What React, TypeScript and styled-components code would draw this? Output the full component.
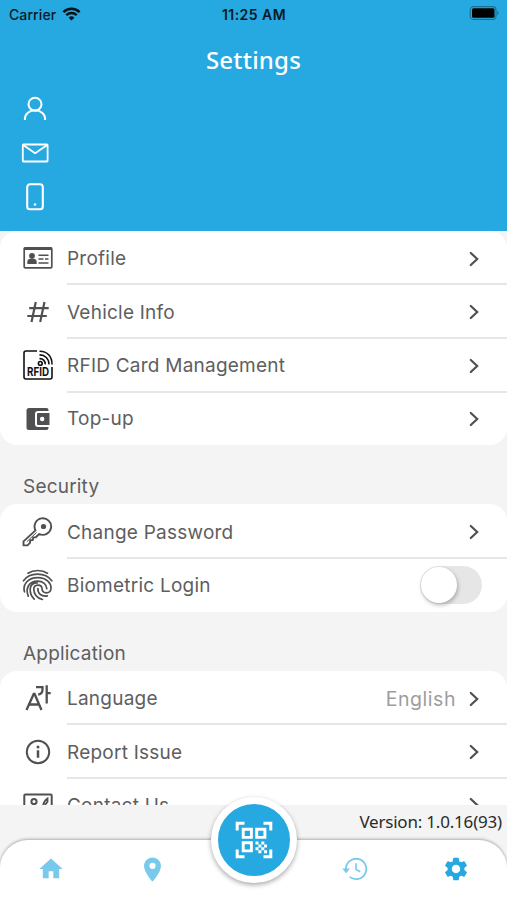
import React from 'react';
import styled, { createGlobalStyle } from 'styled-components';
import { MdHome, MdLocationOn, MdSettings } from 'react-icons/md';

const GlobalStyle = createGlobalStyle`
  * { box-sizing: border-box; }
  body { margin: 0; background: #f4f4f4; }
`;

const Screen = styled.div`
  width: 507px;
  height: 900px;
  overflow: hidden;
  display: flex;
  flex-direction: column;
  background: #f4f4f4;
  color: #5e5e60;
  font-family: Inter, 'Liberation Sans', sans-serif;
`;

const Header = styled.header`
  height: 230.5px;
  flex: none;
  background: #26a8e1;
`;

const StatusBar = styled.div`
  height: 28px;
  padding: 0 8px 0 9px;
  display: grid;
  grid-template-columns: 1fr auto 1fr;
  align-items: center;
  color: #0a1a24;
`;

const Carrier = styled.div`
  display: flex;
  align-items: center;
  gap: 6px;
  font-size: 14px;
  letter-spacing: 0.1px;
  font-weight: 450;
`;

const Clock = styled.div`
  font-size: 14px;
  font-weight: 600;
  letter-spacing: 0.45px;
`;

const Battery = styled.div`
  display: flex;
  justify-content: flex-end;
  transform: translateY(-1px);
`;

const Title = styled.h1`
  margin: 13px 0 0;
  height: 38px;
  line-height: 38px;
  text-align: center;
  color: #fff;
  font-family: 'Noto Sans', sans-serif;
  font-weight: 500;
  font-size: 24px;
  letter-spacing: 0.2px;
`;

const Contact = styled.div`
  display: flex;
  flex-direction: column;
  padding: 7.5px 0 0 20px;
`;

const ContactLine = styled.div`
  height: 44px;
  width: 30px;
  display: flex;
  align-items: center;
  justify-content: center;
`;

const Content = styled.main`
  flex: 1;
  min-height: 0;
  overflow: hidden;
`;

const Card = styled.section`
  background: #fff;
  border-radius: 17px;
  overflow: hidden;
`;

const Heading = styled.h2`
  margin: 0;
  height: 59px;
  padding: 23px 0 0 23px;
  font-size: 19px;
  line-height: 37px;
  font-weight: 400;
  letter-spacing: 0.2px;
`;

const Row = styled.div`
  height: 53.7px;
  display: flex;
`;

const IconCell = styled.div`
  width: 67px;
  padding-left: 8px;
  padding-top: 1px;
  display: flex;
  align-items: center;
  justify-content: center;
`;

const Body = styled.div<{ $last?: boolean }>`
  flex: 1;
  display: flex;
  align-items: center;
  padding-right: 28px;
  padding-top: ${(p) => (p.$last ? '0.5px' : '2.5px')};
  box-shadow: ${(p) => (p.$last ? 'none' : '0 1px 0 #e6e6e6, inset 0 -1px 0 #e6e6e6')};
`;

const Label = styled.span`
  flex: 1;
  font-size: 19px;
  letter-spacing: 0.23px;
`;

const Value = styled.span`
  font-size: 19.500px;
  letter-spacing: 0.55px;
  color: #9d9d9d;
  margin-right: 13px;
`;

const Switch = styled.div`
  width: 62px;
  height: 38px;
  margin-right: -3px;
  padding: 1px;
  border-radius: 19px;
  background: #e6e6e6;
`;

const Knob = styled.div`
  width: 36px;
  height: 36px;
  border-radius: 50%;
  background: #fff;
  box-shadow: 1px 2px 4px rgba(0, 0, 0, 0.28);
`;

const Footer = styled.footer`
  height: 95px;
  flex: none;
  position: relative;
  background: #f4f4f4;
`;

const Version = styled.div`
  height: 35px;
  padding-right: 5px;
  text-align: right;
  line-height: 34px;
  color: #2b2b2b;
  font-family: 'Noto Sans', sans-serif;
  font-size: 17px;
  letter-spacing: -0.2px;
`;

const Nav = styled.nav`
  height: 60px;
  border-radius: 28px 28px 0 0;
  background: #fff;
  box-shadow: 0 -1px 3px rgba(0, 0, 0, 0.3);
  display: grid;
  grid-template-columns: repeat(5, 1fr);
`;

const Tab = styled.div<{ $active?: boolean }>`
  display: flex;
  align-items: center;
  justify-content: center;
  padding-bottom: 2px;
  color: ${(p) => (p.$active ? '#26a8e1' : '#78c9eb')};
`;

const ScanButton = styled.div`
  position: absolute;
  left: 211px;
  top: -8px;
  width: 86px;
  height: 86px;
  border: 7.5px solid #fff;
  border-radius: 50%;
  background: #26a8e1;
  box-shadow: 0 2px 5px rgba(0, 0, 0, 0.35);
  display: flex;
  align-items: center;
  justify-content: center;
`;

const RfidText = styled.text`
  font: 700 11.5px Inter, sans-serif;
`;

const Chevron = () => (
  <svg width="10" height="16" viewBox="0 0 10 16" fill="none" stroke="#505052" strokeWidth="2.2" strokeLinecap="round">
    <path d="M1.800 2 8.200 8l-6.400 6" />
  </svg>
);

const WifiIcon = () => (
  <svg width="19" height="14" viewBox="0 0 18 14" fill="none" stroke="#06131b" strokeWidth="2.5">
    <path d="M.9 5.1a11.6 11.6 0 0 1 16.2 0M3.8 8.2a7.500 7.500 0 0 1 10.4 0" />
    <path d="M9 13.5 6.1 10.7a4.2 4.2 0 0 1 5.8 0Z" fill="#06131b" stroke="none" />
  </svg>
);

const BatteryIcon = () => (
  <svg width="30" height="14" viewBox="0 0 30 14">
    <rect x="1.2" y=".6" width="25.8" height="12.8" rx="3.5" fill="none" stroke="#19708f" strokeWidth="1.1" />
    <rect x="3" y="2.300" width="22.500" height="9.500" rx="1.500" fill="#000" />
    <path d="M28.200 4.700a2.600 2.600 0 0 1 0 4.600Z" fill="#19708f" />
  </svg>
);

const PersonIcon = () => (
  <svg width="24" height="26" viewBox="0 0 24 26" fill="none" stroke="#fff" strokeWidth="2">
    <circle cx="12" cy="8.200" r="6.500" />
    <path d="M1.900 24v-1.200a10.100 8.600 0 0 1 20.200 0V24" />
  </svg>
);

const MailIcon = () => (
  <svg width="28" height="20" viewBox="0 0 28 20" fill="none" stroke="#fff" strokeWidth="1.8" strokeLinejoin="round">
    <rect x="1.800" y="1.500" width="24.800" height="17" rx=".7" />
    <path d="m2.200 2 11.900 8.200L26.200 2" />
  </svg>
);

const PhoneIcon = () => (
  <svg width="18" height="28" viewBox="0 0 18 28" fill="none" stroke="#fff" strokeWidth="2.1">
    <rect x="1.200" y="1.300" width="15.600" height="25" rx="2.800" />
    <circle cx="9" cy="21.500" r="1.300" fill="#fff" stroke="none" />
  </svg>
);

const ProfileIcon = () => (
  <svg width="30" height="24" viewBox="0 0 30 24" fill="none" stroke="#505052" strokeWidth="1.700">
    <rect x="1.200" y="1.800" width="27.600" height="20" rx="1" />
    <path d="M1 2.800h28" strokeWidth="2.400" />
    <path d="M15.500 9.300h10M15.500 13h5M22 13h3.500M15.500 17h10" strokeWidth="1.500" />
    <circle cx="9" cy="9.800" r="2.900" fill="#505052" stroke="none" />
    <path d="M4.300 18v-2.300c0-2 2-3.200 4.700-3.200s4.700 1.200 4.700 3.200V18Z" fill="#505052" stroke="none" />
  </svg>
);

const HashIcon = () => (
  <svg width="24" height="22" viewBox="0 0 24 22" fill="none" stroke="#505052" strokeWidth="2.200">
    <path d="M9.800 1 5.500 21M18.500 1l-4.300 20M3.200 7.200h19.500M1.300 15h19.500" />
  </svg>
);

const RfidIcon = () => (
  <svg width="30" height="30" viewBox="0 0 30 30" fill="none" stroke="#111" strokeWidth="1.600">
    <path d="M14 1H3a2 2 0 0 0-2 2v24a2 2 0 0 0 2 2h24a2 2 0 0 0 2-2V17" />
    <circle cx="17.300" cy="13.400" r="1.900" />
    <path d="M16.500 8.600a5.300 5.300 0 0 1 5.700 5.800M16.500 4.900a9 9 0 0 1 9.400 9.500M16.500 1.200C24 1 29.200 6.400 29 14.400" />
    <RfidText x="4" y="26.200" textLength="22" lengthAdjust="spacingAndGlyphs" fill="#111" stroke="none">RFID</RfidText>
  </svg>
);

const WalletIcon = () => (
  <svg width="24" height="24" viewBox="0 0 24 24">
    <path d="M3 1h17.500A2 2 0 0 1 22.500 3v1H12a3 3 0 0 0-3 3v10a3 3 0 0 0 3 3h10.500v1a2 2 0 0 1-2 2H3a2.500 2.500 0 0 1-2.500-2.500v-17A2.500 2.500 0 0 1 3 1Z" fill="#505052" />
    <path fillRule="evenodd" d="M12 6h11.500v12H12a1 1 0 0 1-1-1V7a1 1 0 0 1 1-1Zm4.200 3.800a2.200 2.200 0 1 0 0 4.400 2.200 2.200 0 0 0 0-4.400Z" fill="#505052" />
  </svg>
);

const KeyIcon = () => (
  <svg width="31" height="30" viewBox="0 0 31 30" fill="none" stroke="#505052" strokeWidth="1.900" strokeLinejoin="round">
    <path d="M13.500 13.400A8.300 8.300 0 1 1 17.200 17l-3.400 3.200-2.600.2-.3 2.600-2.700.3-.2 2.600-2.500 2.500H1.500v-4Z" />
    <circle cx="21.500" cy="9.500" r="2.600" fill="#505052" stroke="none" />
    <path d="m4.800 24.800 9.700-9.300" strokeWidth="1" />
  </svg>
);

const FingerprintIcon = () => (
  <svg width="32" height="34" viewBox="0 0 32 34" fill="none" stroke="#505052" strokeWidth="1.700" strokeLinecap="round">
    <path d="M6 5.200C11.500 1.600 20 1.600 25.500 5.200M1.500 12.800C7.500 3.800 23.500 3.800 29.800 12.800" />
    <path d="M2.500 23.800C.2 16 6.500 9.600 15.700 9.600S29.300 15.500 29 20.500C28.500 26.200 20.300 26.400 20 20.500 19.600 15.700 11.900 16 11.800 21c0 5.200 3.400 9 8.600 10.500" />
    <path d="M6.300 28.200C3 20.500 7 13.200 15.700 13.200c5.300 0 9 3.200 9.100 7.500M12.200 31.200C9.200 28.200 7.900 24.500 8.200 20.500 9 15.500 13 14.800 15.500 14.900" />
    <path d="M15.900 20.500c-.2 5.200 3.600 8.300 9.400 7.400" />
  </svg>
);

const LanguageIcon = () => (
  <svg width="26" height="28" viewBox="0 0 26 28" fill="none" stroke="#505052" strokeWidth="2.300">
    <path d="m1.500 26 7.200-16h.9L16.500 26M4.300 20.500h9.500" />
    <path d="M11 3.200h6.500v2.500c0 3-1.500 4.300-4.300 5M21.700 1.200v18.300M22 9.200h3.700" />
  </svg>
);

const InfoIcon = () => (
  <svg width="26" height="26" viewBox="0 0 26 26" fill="none" stroke="#505052" strokeWidth="2">
    <circle cx="13" cy="13" r="11.200" />
    <path d="M13 11.200v7.600" strokeWidth="2.500" />
    <circle cx="13" cy="8" r="1.500" fill="#505052" stroke="none" />
  </svg>
);

const ContactIcon = () => (
  <svg width="30" height="24" viewBox="0 0 30 24" fill="none" stroke="#505052" strokeWidth="2">
    <rect x="1.300" y="1.500" width="27.400" height="21" rx="1" />
    <circle cx="11" cy="8.500" r="2.600" />
    <path d="M5.500 18c0-5 11-5 11 0" />
    <path d="M20 14c0-3.500 1-6 4.500-8.500v3.500l-2 2v3l3 2" strokeWidth="1.800" />
  </svg>
);

const HistoryIcon = () => (
  <svg width="26" height="24" viewBox="0 0 26 24" fill="none" stroke="currentColor" strokeWidth="1.800">
    <path d="M3.900 12.300a10.200 10.200 0 1 1 3.800 7.600" />
    <path d="M.2 11.500h7.800l-3.900 4.800Z" fill="currentColor" stroke="none" />
    <path d="M14 6.300v6.200l4.300 2.300" strokeWidth="1.600" />
  </svg>
);

const QrIcon = () => (
  <svg width="38" height="38" viewBox="0 0 38 38" fill="none" stroke="#fff" strokeWidth="3">
    <path d="M2.200 9.500V2.200h7.300M28.500 2.200h7.300v7.300M35.800 28.500v7.300h-7.300M9.500 35.800H2.200v-7.300" />
    <path d="M8.200 8.200h8.200v8.200H8.200ZM21.700 8.200h8.200v8.200h-8.200ZM8.200 21.700h8.200v8.200H8.200Z" strokeWidth="2.900" />
    <path
      d="M20.500 20.500h3v3h-3ZM26.300 20.500h3v3h-3ZM23.400 23.400h3v3h-3ZM29 23.400h3v3h-3ZM20.500 26.300h3v3h-3ZM26.300 26.300h3v3h-3ZM23.400 29.200h3v3h-3ZM29 29.200h3v3h-3Z"
      fill="#fff"
      stroke="none"
    />
  </svg>
);

interface ItemProps {
  icon: React.ReactNode;
  label: string;
  value?: string;
  control?: React.ReactNode;
  last?: boolean;
}

const Item = ({ icon, label, value, control, last }: ItemProps) => (
  <Row>
    <IconCell>{icon}</IconCell>
    <Body $last={last}>
      <Label>{label}</Label>
      {value && <Value>{value}</Value>}
      {control ?? <Chevron />}
    </Body>
  </Row>
);

export default function App() {
  return (
    <Screen>
      <GlobalStyle />
      <Header>
        <StatusBar>
          <Carrier>Carrier <WifiIcon /></Carrier>
          <Clock>11:25 AM</Clock>
          <Battery><BatteryIcon /></Battery>
        </StatusBar>
        <Title>Settings</Title>
        <Contact>
          <ContactLine><PersonIcon /></ContactLine>
          <ContactLine><MailIcon /></ContactLine>
          <ContactLine><PhoneIcon /></ContactLine>
        </Contact>
      </Header>
      <Content>
        <Card>
          <Item icon={<ProfileIcon />} label="Profile" />
          <Item icon={<HashIcon />} label="Vehicle Info" />
          <Item icon={<RfidIcon />} label="RFID Card Management" />
          <Item icon={<WalletIcon />} label="Top-up" last />
        </Card>
        <Heading>Security</Heading>
        <Card>
          <Item icon={<KeyIcon />} label="Change Password" />
          <Item
            icon={<FingerprintIcon />}
            label="Biometric Login"
            control={<Switch><Knob /></Switch>}
            last
          />
        </Card>
        <Heading>Application</Heading>
        <Card>
          <Item icon={<LanguageIcon />} label="Language" value="English" />
          <Item icon={<InfoIcon />} label="Report Issue" />
          <Item icon={<ContactIcon />} label="Contact Us" last />
        </Card>
      </Content>
      <Footer>
        <Version>Version: 1.0.16(93)</Version>
        <Nav>
          <Tab><MdHome size={28} /></Tab>
          <Tab><MdLocationOn size={29} /></Tab>
          <Tab />
          <Tab><HistoryIcon /></Tab>
          <Tab $active><MdSettings size={28} /></Tab>
        </Nav>
        <ScanButton><QrIcon /></ScanButton>
      </Footer>
    </Screen>
  );
}
